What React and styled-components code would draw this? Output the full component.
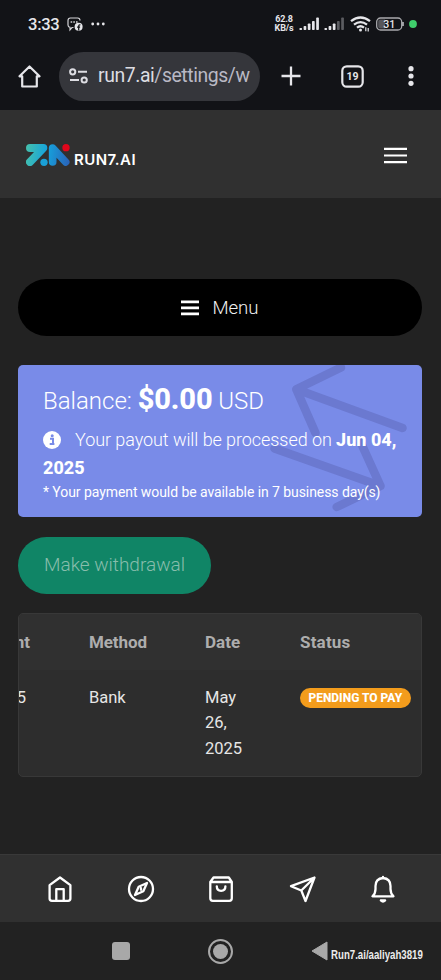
import React from "react";
import styled, { createGlobalStyle } from "styled-components";

const GlobalStyle = createGlobalStyle`
  * { box-sizing: border-box; }
  body { margin: 0; background: #222222; font-family: Roboto, sans-serif; color: #fff; }
  svg { display: block; flex: none; }
`;

const Screen = styled.div`
  width: 441px;
  height: 980px;
  display: flex;
  flex-direction: column;
  overflow: hidden;
  background: #222222;
`;

const BrowserChrome = styled.header`
  height: 110px;
  flex: none;
  background: #121317;
  color: #e6e6ea;
`;

const StatusBar = styled.div`
  height: 48px;
  display: flex;
  align-items: center;
  justify-content: space-between;
  padding: 0 24px 0 28px;
`;

const StatusGroup = styled.div`
  display: flex;
  align-items: center;
  gap: ${(p) => p.$gap}px;
`;

const Clock = styled.span`
  font-size: 16.6px;
  font-weight: 500;
  line-height: 20px;
  letter-spacing: -0.3px;
  margin-top: 1px;
`;

const NetSpeed = styled.span`
  width: 20px;
  font-size: 9px;
  line-height: 8.6px;
  font-weight: 700;
  text-align: center;
  white-space: nowrap;
  letter-spacing: -0.1px;
`;

const AddressBar = styled.div`
  height: 56px;
  display: flex;
  align-items: center;
  padding-left: 18px;
`;

const UrlPill = styled.div`
  width: 201px;
  height: 49px;
  margin-left: 18px;
  padding-left: 10px;
  border-radius: 25px;
  background: #35363b;
  display: flex;
  align-items: center;
`;

const Url = styled.span`
  width: 153px;
  margin-left: 10px;
  overflow: hidden;
  white-space: nowrap;
  font-size: 19.4px;
  line-height: 28px;
  letter-spacing: -0.42px;
  color: #dddde2;
`;

const UrlPath = styled.span`
  color: #b9b9c4;
`;

const ChromeActions = styled.div`
  display: flex;
  align-items: center;
  margin-left: 21px;
  gap: 40px;
`;

const SiteHeader = styled.header`
  height: 88px;
  flex: none;
  display: flex;
  align-items: center;
  justify-content: space-between;
  padding: 1px 34px 0 26px;
  background: #303030;
`;

const Brand = styled.div`
  display: flex;
  align-items: center;
  gap: 4px;
`;

const BrandName = styled.span`
  font: 600 15px/20px Inter, sans-serif;
  margin-top: 10px;
  letter-spacing: 0.45px;
`;

const Page = styled.main`
  flex: 1;
  padding: 81px 19px 0 18px;
`;

const MenuButton = styled.button`
  width: 100%;
  height: 57px;
  padding: 0;
  border: 0;
  border-radius: 29px;
  background: #000;
  color: #f1f1f1;
  display: flex;
  align-items: center;
  justify-content: center;
  gap: 13px;
  font: 300 18.6px/28px Roboto, sans-serif;
`;

const BalanceCard = styled.section`
  position: relative;
  height: 152px;
  margin-top: 29px;
  padding: 18px 0 0 25px;
  border-radius: 5px;
  background: #798be8;
  overflow: hidden;
`;

const Watermark = styled.svg`
  position: absolute;
  inset: 0;
`;

const CardText = styled.div`
  position: relative;
  white-space: nowrap;
`;

const Balance = styled.div`
  height: 36px;
  line-height: 36px;
  font-size: 24px;
  font-weight: 300;
`;

const Amount = styled.strong`
  font-size: 29px;
  line-height: 0;
  font-weight: 800;
  letter-spacing: -0.15px;
`;

const Payout = styled.div`
  margin-top: 7px;
  font-size: 18px;
  line-height: 27.5px;
  font-weight: 300;
`;

const PayoutLine = styled.div`
  display: flex;
  align-items: center;
  gap: ${(p) => p.$gap || 0}px;
  letter-spacing: ${(p) => p.$track || 0}px;
`;

const PayoutDate = styled.strong`
  font-weight: 800;
  letter-spacing: 0;
`;

const FinePrint = styled.div`
  font-size: 14px;
  line-height: 22px;
  letter-spacing: -0.07px;
`;

const WithdrawButton = styled.button`
  width: 193px;
  height: 57px;
  margin-top: 19.5px;
  padding: 0 0 0 26px;
  text-align: left;
  border: 0;
  border-radius: 29px;
  background: #108566;
  color: #88bdac;
  display: block;
  font: 300 19px/28px Roboto, sans-serif;
`;

const TableCard = styled.section`
  height: 164px;
  margin-top: 19px;
  border: 1px solid #383838;
  border-radius: 5px;
  background: #2d2d2d;
  overflow: hidden;
`;

const Row = styled.div`
  display: grid;
  grid-template-columns: 70px 116px 95px 121px;
`;

const HeadRow = styled(Row)`
  height: 56px;
  align-items: center;
  background: #303030;
  color: #adadad;
  font-size: 17px;
  font-weight: 700;
`;

const BodyRow = styled(Row)`
  padding-top: 15px;
  font-size: 16.5px;
  line-height: 25.6px;
  color: #e6e6e6;
`;

const Cell = styled.div`
  letter-spacing: ${(p) => p.$track || 0}px;
`;

const ClippedCell = styled(Cell)`
  display: flex;
  justify-content: flex-end;
  width: ${(p) => p.$end}px;
  white-space: nowrap;
`;

const DateCell = styled(Cell)`
  width: 40px;
`;

const Badge = styled.span`
  display: block;
  width: 110.5px;
  height: 20px;
  margin-top: 3px;
  border-radius: 10px;
  background: #f39c1c;
  color: #fff;
  text-align: center;
  font-size: 12px;
  line-height: 20.5px;
  font-weight: 800;
  white-space: nowrap;
`;

const TabBar = styled.nav`
  height: 68px;
  flex: none;
  display: grid;
  grid-template-columns: repeat(5, 1fr);
  place-items: center;
  padding: 1px 18px 0 20px;
  border-top: 1px solid #393939;
  background: #303030;
`;

const SystemBar = styled.footer`
  height: 58px;
  flex: none;
  display: flex;
  align-items: center;
  padding-left: 112px;
  background: #222222;
`;

const SquareKey = styled.span`
  width: 18px;
  height: 18px;
  border-radius: 3px;
  background: #a8a8a8;
`;

const CircleKey = styled.span`
  width: 25px;
  height: 25px;
  margin-left: 78px;
  border: 2px solid #a8a8a8;
  border-radius: 50%;
  padding: 3px;
  background: #a8a8a8 content-box;
  background-clip: content-box;
`;

const BackKey = styled.svg`
  margin-left: 78px;
`;

const Handle = styled.span`
  width: 92px;
  margin: 8px 0 0 3px;
  font: 700 12px/14px "Liberation Sans", Arial, sans-serif;
  white-space: nowrap;
  transform: scaleX(0.805);
  transform-origin: left;
  color: #ececec;
`;

const Signal = ({ dim }) => (
  <svg width="21" height="14" viewBox="0 0 21 14" fill="#e6e6ea">
    {[2, 4, 6.5, 9, 12.5].map((h, i) => (
      <rect key={h} x={i * 4.2 + 0.4} y={13 - h} width="2.7" height={h} rx="0.8" opacity={dim && i > 2 ? 0.35 : 1} />
    ))}
  </svg>
);

const tabStroke = {
  width: 30,
  height: 30,
  viewBox: "0 0 30 30",
  fill: "none",
  stroke: "#fff",
  strokeWidth: 2.3,
  strokeLinejoin: "round",
  strokeLinecap: "round",
};

export default function App() {
  return (
    <>
      <GlobalStyle />
      <Screen>
        <BrowserChrome>
          <StatusBar>
            <StatusGroup $gap={8}>
              <Clock>3:33</Clock>
              <svg width="16" height="15" viewBox="0 0 16 15" fill="none" stroke="#d4d4d8">
                <path d="M6.5 10.5H5l-2 2.3v-2.5Q1 10 1 8V3.4Q1 1 3.4 1h7.2Q13 1 13 3.4" strokeWidth="1.2" />
                <path d="M3.6 5h1.6M6.3 5h1.6M9 5h1.6" strokeWidth="1.3" />
                <circle cx="11.6" cy="9.8" r="4" fill="#e6e6ea" stroke="none" />
                <path d="M13.4 7.9q-1.7-.3-1.7 1.2v4.4M10.1 10.2h3" stroke="#121317" strokeWidth="1.2" />
              </svg>
              <svg width="14" height="4" viewBox="0 0 14 4" fill="#e6e6ea">
                <circle cx="1.7" cy="2" r="1.4" /><circle cx="7" cy="2" r="1.4" /><circle cx="12.3" cy="2" r="1.4" />
              </svg>
            </StatusGroup>
            <StatusGroup $gap={4.6}>
              <NetSpeed>62.8<br />KB/s</NetSpeed>
              <Signal />
              <Signal dim />
              <svg width="21" height="16" viewBox="0 0 21 16" fill="none" stroke="#e6e6ea" strokeWidth="2.3">
                <path d="M1 5.2Q10.5-2.2 20 5.2M4 8.7q6.5-5.2 13 0M7 11.7q3.5-2.8 7 0" />
                <circle cx="10.5" cy="14" r="1.5" fill="#e6e6ea" stroke="none" />
                <path d="M15.8 11.2v4M18.2 12v3.6" strokeWidth="1.2" />
              </svg>
              <svg width="29" height="14" viewBox="0 0 29 14">
                <rect x="1.7" y="1" width="25" height="12" rx="3.8" fill="none" stroke="#a9a9ad" strokeWidth="1.3" />
                <path d="M5 2.5h5v9H5Q3.2 11.5 3.2 9.5v-5Q3.200 2.500 5 2.500" fill="#56565b" />
                <path d="M28 5v4" stroke="#c5c5c9" strokeWidth="1.5" />
                <text x="14.2" y="10.7" textAnchor="middle" fontSize="10.5" fontWeight="500" fill="#e6e6ea" fontFamily="Roboto">31</text>
              </svg>
              <svg width="8" height="8" viewBox="0 0 8 8"><circle cx="4" cy="4" r="3.9" fill="#3fce6c" /></svg>
            </StatusGroup>
          </StatusBar>
          <AddressBar>
            <svg width="23" height="23" viewBox="0 0 23 23" fill="none" stroke="#e6e6ea" strokeWidth="2.2" strokeLinejoin="round">
              <path d="M1.500 11.300L11.500 1.500 21.500 11.300H18.800V21.500H4.200V11.300Z" />
            </svg>
            <UrlPill>
              <svg width="19" height="16" viewBox="0 0 19 16" fill="none" stroke="#dddde2" strokeWidth="2">
                <circle cx="3.700" cy="3.800" r="2.600" /><path d="M9 3.800h9M1 12h9" /><circle cx="15.200" cy="12" r="2.600" />
              </svg>
              <Url>run7.ai<UrlPath>/settings/w</UrlPath></Url>
            </UrlPill>
            <ChromeActions>
              <svg width="20" height="20" viewBox="0 0 20 20" stroke="#e6e6ea" strokeWidth="2.3"><path d="M10 .5v19M.5 10h19" /></svg>
              <svg width="23" height="23" viewBox="0 0 23 23">
                <rect x="1.300" y="1.300" width="20.400" height="20.400" rx="4.500" fill="none" stroke="#e6e6ea" strokeWidth="2.200" />
                <text x="11.500" y="15.200" textAnchor="middle" fontSize="10.500" fontWeight="700" fill="#e6e6ea" fontFamily="Roboto">19</text>
              </svg>
              <svg width="20" height="22" viewBox="0 0 20 22" fill="#e6e6ea">
                <circle cx="7" cy="3.700" r="2.600" /><circle cx="7" cy="11" r="2.600" /><circle cx="7" cy="18.300" r="2.600" />
              </svg>
            </ChromeActions>
          </AddressBar>
        </BrowserChrome>

        <SiteHeader>
          <Brand>
            <svg width="44" height="22" viewBox="0 0 132 66" fill="none" strokeLinecap="round" strokeLinejoin="round">
              <defs>
                <linearGradient id="brand" gradientUnits="userSpaceOnUse" x1="0" y1="30" x2="132" y2="50">
                  <stop offset="0" stopColor="#43bfae" /><stop offset="0.45" stopColor="#15a4dd" /><stop offset="1" stopColor="#2a62b8" />
                </linearGradient>
              </defs>
              <path d="M12 12H52L12 54" stroke="url(#brand)" strokeWidth="24" />
              <circle cx="54" cy="55" r="11" fill="#1aa0d6" />
              <path d="M80 54V12L119 54" stroke="url(#brand)" strokeWidth="23" />
              <circle cx="120" cy="11" r="11" fill="#e1061b" />
            </svg>
            <BrandName>RUN7.AI</BrandName>
          </Brand>
          <svg width="23" height="18" viewBox="0 0 23 18" stroke="#fff" strokeWidth="2.200"><path d="M0 2.800h23M0 9.500h23M0 16.200h23" /></svg>
        </SiteHeader>

        <Page>
          <MenuButton>
            <svg width="18" height="16" viewBox="0 0 18 16" stroke="#fff" strokeWidth="2.800"><path d="M0 1.800h18M0 7.800h18M0 13.800h18" /></svg>
            Menu
          </MenuButton>

          <BalanceCard>
            <Watermark width="404" height="152" viewBox="18 365 404 152" fill="none" stroke="#6b79d0" strokeWidth="8.500" strokeLinecap="round" strokeLinejoin="round">
              <path d="M341 367.500L296.300 389.300 402.500 428M296.300 389.300L315.500 433" />
              <path d="M274.500 448.500L380.500 486 336.700 507M380.500 486L361 443" />
            </Watermark>
            <CardText>
              <Balance>Balance: <Amount>$0.00</Amount> USD</Balance>
              <Payout>
                <PayoutLine $gap={14} $track={-0.07}>
                  <svg width="18" height="18" viewBox="0 0 18 18">
                    <circle cx="9" cy="9" r="9" fill="#fff" />
                    <path d="M7 7.800h3v5.200M6.700 13h4.700" stroke="#798be8" strokeWidth="2" fill="none" />
                    <circle cx="9.200" cy="4.800" r="1.500" fill="#798be8" />
                  </svg>
                  <span>Your payout will be processed on <PayoutDate>Jun 04,</PayoutDate></span>
                </PayoutLine>
                <PayoutLine><PayoutDate>2025</PayoutDate></PayoutLine>
              </Payout>
              <FinePrint>* Your payment would be available in 7 business day(s)</FinePrint>
            </CardText>
          </BalanceCard>

          <WithdrawButton>Make withdrawal</WithdrawButton>

          <TableCard>
            <HeadRow>
              <ClippedCell $end={11}>Amount</ClippedCell>
              <Cell $track={-0.1}>Method</Cell>
              <Cell>Date</Cell>
              <Cell $track={0.2}>Status</Cell>
            </HeadRow>
            <BodyRow>
              <ClippedCell $end={7}>5</ClippedCell>
              <Cell>Bank</Cell>
              <DateCell>May 26, 2025</DateCell>
              <Cell><Badge>PENDING TO PAY</Badge></Cell>
            </BodyRow>
          </TableCard>
        </Page>

        <TabBar>
          <svg {...tabStroke}>
            <path d="M4.600 11.200L15 3.500l10.400 7.700v13.300q0 2.300-2.300 2.300H6.900q-2.300 0-2.300-2.300ZM11.300 26.500V15.200h7.400v11.300" />
          </svg>
          <svg {...tabStroke}>
            <circle cx="15" cy="15" r="12" />
            <path d="M21 9l-3.700 8.300L9 21l3.700-8.300ZM15 14.200v1.600" />
          </svg>
          <svg {...tabStroke}>
            <path d="M4.300 8L7.500 3.500h15.300L25.800 8v16.300q0 2.500-2.500 2.500H6.800q-2.500 0-2.500-2.500ZM4.600 8h21M10.800 12.300q0 4.500 4.300 4.500t4.300-4.500" />
          </svg>
          <svg {...tabStroke}>
            <path d="M27.500 3.500L4 12.200l10.300 4.300L18.500 27ZM27.500 3.500L14.300 16.500" />
          </svg>
          <svg {...tabStroke}>
            <path d="M4.500 22.300h21q-3-2.800-3-7.300v-3q0-7.300-7.500-8-7.500.7-7.500 8v3q0 4.500-3 7.300ZM15 4V3M12.900 26.500h4.200q-2.100 2-4.200 0" />
          </svg>
        </TabBar>

        <SystemBar>
          <SquareKey />
          <CircleKey />
          <BackKey width="17" height="20" viewBox="0 0 17 20" fill="#a8a8a8" stroke="#a8a8a8" strokeLinejoin="round"><path d="M1 10L16 1v18Z" /></BackKey>
          <Handle>Run7.ai/aaliyah3819</Handle>
        </SystemBar>
      </Screen>
    </>
  );
}
